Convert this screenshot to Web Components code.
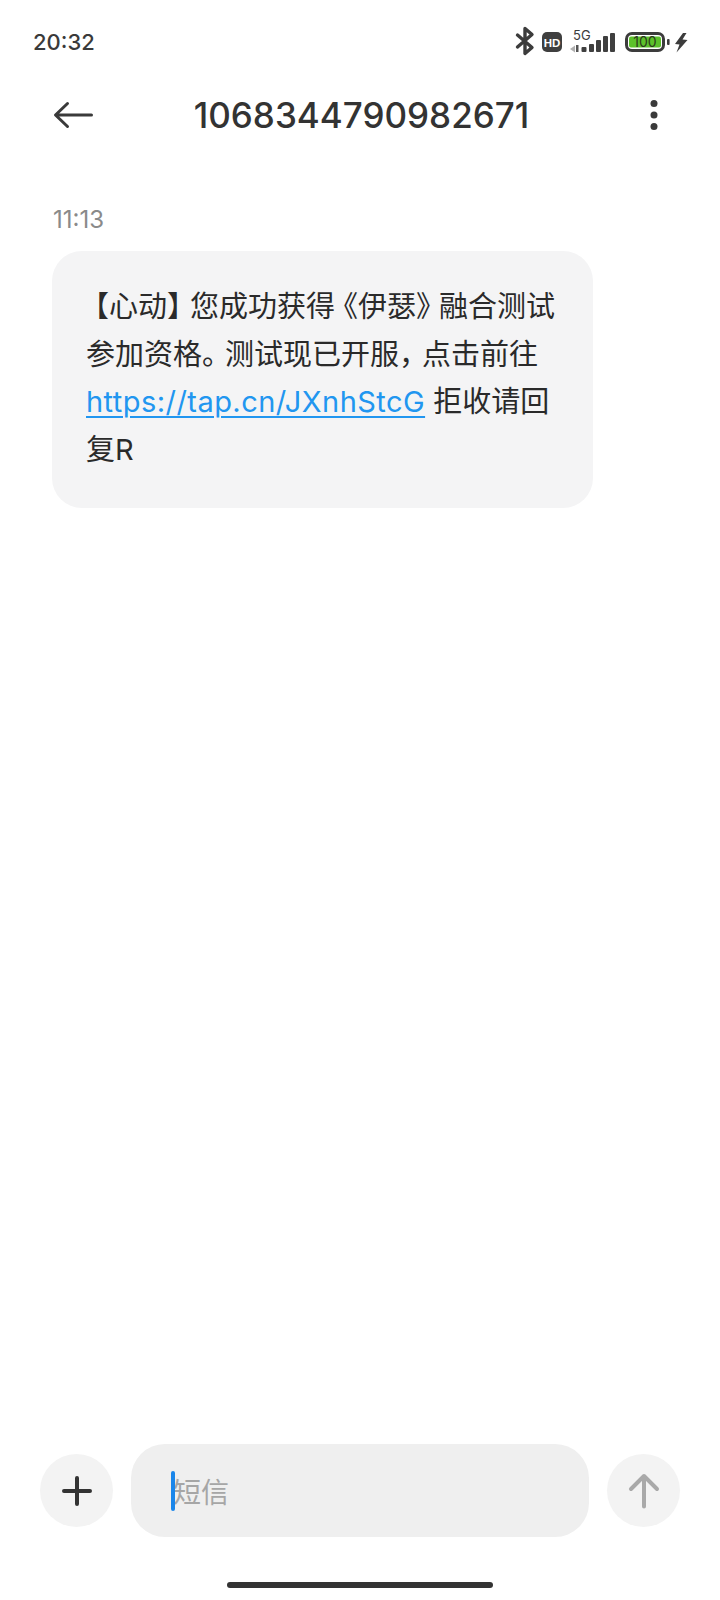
<!DOCTYPE html>
<html lang="zh">
<head>
<meta charset="utf-8">
<title>短信</title>
<style>
  html, body { margin: 0; padding: 0; background: #fff; }
  body { width: 720px; height: 1600px; overflow: hidden; font-family: "Inter", "Noto Sans CJK SC", sans-serif; }
  sms-screen { height: 1600px; }
</style>
</head>
<body>
<sms-screen>
  <status-bar slot="status" time="20:32"></status-bar>
  <top-bar slot="top" title="1068344790982671"></top-bar>
  <message-bubble time="11:13"><span class="o">【</span>心动<span class="c">】</span>您成功获得<span class="o">《</span>伊瑟<span class="c">》</span>融合测试<br>参加资格<span class="c">。</span>测试现已开服<span class="c">，</span>点击前往<br><a href="#">https://tap.cn/JXnhStcG</a> 拒收请回<br>复R</message-bubble>
  <compose-bar slot="compose" placeholder="短信"></compose-bar>
</sms-screen>
<script>
class smsScreen extends HTMLElement {
  constructor() {
    super();
    this.attachShadow({ mode: 'open' });
    this.shadowRoot.innerHTML = `
      <style>
        :host { display: flex; flex-direction: column; width: 720px; background: #fff; }
        main { flex: 1; padding: 0 52px; }
      </style>
      <slot name="status"></slot>
      <slot name="top"></slot>
      <main><slot></slot></main>
      <slot name="compose"></slot>
    `;
  }
}

class statusBar extends HTMLElement {
  constructor() {
    super();
    this.attachShadow({ mode: 'open' });
    this.shadowRoot.innerHTML = `
      <style>
        :host { display: flex; align-items: center; justify-content: space-between; height: 84px; padding: 0 32px 0 33px; box-sizing: border-box; color: #3a3a3a; }
        .time { font: 500 22px "Inter", sans-serif; }
        svg { display: block; }
      </style>
      <span class="time">${this.getAttribute('time')}</span>
      <svg width="174" height="32" viewBox="0 0 174 32">
        <path d="M3.5 9 L18 21.5 L11 27.5 V2.5 L18 8.5 L3.5 21" fill="none" stroke="#3c3c3c" stroke-width="3.4" stroke-linecap="round" stroke-linejoin="round"/>
        <rect x="28" y="6" width="20" height="20" rx="5" fill="#3f3f3f"/>
        <text x="38" y="20.5" text-anchor="middle" font-family="Liberation Sans" font-weight="700" font-size="11.5" fill="#fff">HD</text>
        <text x="59" y="13.5" font-family="Inter" font-size="13" fill="#3c3c3c">5G</text>
        <path d="M56 23 l5 -3.5 v7z" fill="#b0b0b0"/>
        <path d="M62 19h2.5v7h-2.5z" fill="#555"/>
        <rect x="67.5" y="21" width="5" height="5" rx="1" fill="#3f3f3f"/>
        <rect x="75" y="18" width="5" height="8" rx="1" fill="#3f3f3f"/>
        <rect x="82" y="14" width="5" height="12" rx="1" fill="#3f3f3f"/>
        <rect x="89" y="10" width="5" height="16" rx="1" fill="#3f3f3f"/>
        <rect x="96" y="7" width="5" height="19" rx="1" fill="#3f3f3f"/>
        <rect x="112.5" y="7.5" width="37" height="17" rx="5.5" fill="#fff" stroke="#3c3c3c" stroke-width="3"/>
        <rect x="115" y="10.5" width="32" height="11" rx="2" fill="#5cc12a"/>
        <text x="131" y="21" text-anchor="middle" font-family="Inter" font-size="14" fill="#2b3a1c">100</text>
        <rect x="153" y="13" width="2.6" height="6" rx="1" fill="#3c3c3c"/>
        <path d="M169 7 L161 18 L165.5 18.5 L162.5 26.5 L173.5 14 L168.5 13.5 L172.5 7z" fill="#3c3c3c"/>
      </svg>
    `;
  }
}

class topBar extends HTMLElement {
  constructor() {
    super();
    this.attachShadow({ mode: 'open' });
    this.shadowRoot.innerHTML = `
      <style>
        :host { display: grid; grid-template-columns: 1fr auto 1fr; align-items: center; height: 62px; padding: 0 60px 0 53px; color: #333; }
        h1 { margin: 0 0 0 10px; font: 500 35px "Inter", sans-serif; color: #333; }
        svg { display: block; }
        .menu { justify-self: end; }
      </style>
      <svg width="42" height="30" viewBox="0 0 42 30">
        <path d="M38.5 15 H3 M14.5 3.5 L2.5 15 L14.5 26.5" fill="none" stroke="#3a3a3a" stroke-width="3" stroke-linecap="round" stroke-linejoin="round"/>
      </svg>
      <h1>${this.getAttribute('title')}</h1>
      <svg class="menu" width="12" height="34" viewBox="0 0 12 34">
        <circle cx="6" cy="5.5" r="3.5" fill="#3a3a3a"/>
        <circle cx="6" cy="17" r="3.5" fill="#3a3a3a"/>
        <circle cx="6" cy="28.5" r="3.5" fill="#3a3a3a"/>
      </svg>
    `;
  }
}

class messageBubble extends HTMLElement {
  constructor() {
    super();
    this.attachShadow({ mode: 'open' });
    this.shadowRoot.innerHTML = `
      <style>
        :host { display: block; padding-top: 62px; }
        .time { font: 400 24px/24px "Inter", "Noto Sans CJK SC", sans-serif; color: #8a8a8a; margin: 0 0 19px 1px; }
        .bubble { width: 541px; height: 257px; box-sizing: border-box; padding: 32px 34px 0; background: #f4f4f5; border-radius: 30px; font: 400 29px/47.5px "Inter", "Noto Sans CJK SC", sans-serif; color: #2a2a2a; white-space: nowrap; }
        ::slotted(a) { color: #2196f0; letter-spacing: .45px; text-decoration: underline; text-underline-offset: 4px; text-decoration-thickness: 1.5px; }
        ::slotted(.o) { font-feature-settings: "halt"; margin-left: 8.5px; }
        ::slotted(.c) { font-feature-settings: "halt"; margin-right: 8.5px; }
      </style>
      <div class="time">${this.getAttribute('time')}</div>
      <div class="bubble"><slot></slot></div>
    `;
  }
}

class composeBar extends HTMLElement {
  constructor() {
    super();
    this.attachShadow({ mode: 'open' });
    this.shadowRoot.innerHTML = `
      <style>
        :host { display: block; padding: 0 40px 12px; }
        .row { display: flex; align-items: center; gap: 18px; }
        .round { flex: none; width: 73px; height: 73px; border-radius: 50%; background: #f3f3f3; display: flex; align-items: center; justify-content: center; }
        .input { flex: 1; height: 93px; border-radius: 34px; background: #efefef; display: flex; align-items: center; padding-left: 40px; font: 400 28px "Noto Sans CJK SC", sans-serif; color: #a6a6a6; }
        .caret { width: 4px; height: 40px; margin-right: -2px; border-radius: 2px; background: #1a86ea; position: relative; }
        .home { width: 266px; height: 6px; margin: 45px auto 0; border-radius: 3px; background: #333; }
        svg { display: block; }
      </style>
      <div class="row">
        <div class="round">
          <svg width="32" height="32" viewBox="0 0 32 32"><path d="M16 3 V29 M3 16 H29" stroke="#333" stroke-width="4" stroke-linecap="round"/></svg>
        </div>
        <div class="input"><span class="caret"></span><span>${this.getAttribute('placeholder')}</span></div>
        <div class="round">
          <svg width="32" height="36" viewBox="0 0 32 36"><path d="M16 33.5 V3 M3 16 L16 3 L29 16" fill="none" stroke="#a9a9a9" stroke-width="4" stroke-linecap="round" stroke-linejoin="round"/></svg>
        </div>
      </div>
      <div class="home"></div>
    `;
  }
}

customElements.define('sms-screen', smsScreen);
customElements.define('status-bar', statusBar);
customElements.define('top-bar', topBar);
customElements.define('message-bubble', messageBubble);
customElements.define('compose-bar', composeBar);
</script>
</body>
</html>
